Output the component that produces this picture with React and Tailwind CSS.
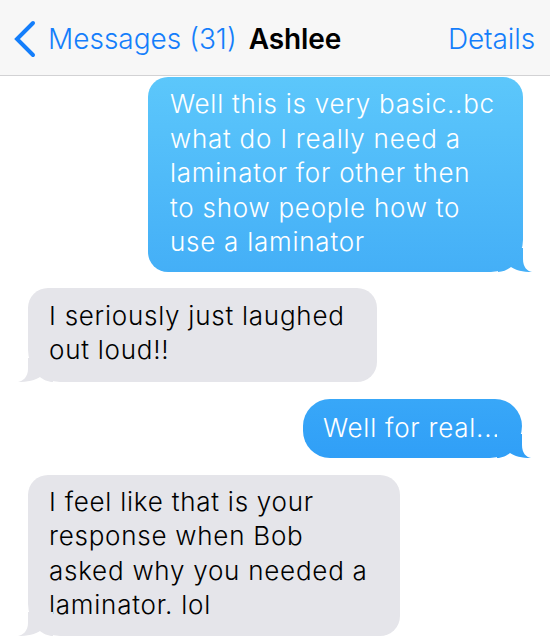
import React from 'react';

// tail drawn in the same gradient as its bubble (h = bubble height)
function BlueTail({ id, h, from, to }) {
  return (
    <svg
      className="absolute right-[-9px] bottom-0 w-[34px] h-[24px] overflow-visible"
      viewBox="0 0 34 24"
    >
      <defs>
        <linearGradient id={id} gradientUnits="userSpaceOnUse" x1="0" y1={24 - h} x2="0" y2="24">
          <stop offset="0" stopColor={from} />
          <stop offset="1" stopColor={to} />
        </linearGradient>
      </defs>
      <path
        d="M0 24 C5 24 10 21.5 13 19 C17 22 25 24 34 24 C29 23 25 19 25 11 L25 0 L0 0 Z"
        fill={`url(#${id})`}
      />
    </svg>
  );
}

function GrayTail() {
  return (
    <svg
      className="absolute left-[-10px] bottom-0 w-[35px] h-[24px]"
      viewBox="0 0 35 24"
    >
      <path
        d="M35 24 C30 24 25 21.5 22 19 C18 22 9 24 0 24 C5 23 10 19 10 11 L10 0 L35 0 Z"
        fill="#e5e5ea"
      />
    </svg>
  );
}

export default function App() {
  return (
    <div className="w-[550px] h-[640px] overflow-hidden bg-white font-['Inter','Liberation_Sans',sans-serif]">
      {/* Nav bar */}
      <div className="h-[76px] bg-[#f7f7f7] border-b border-[#d2d2d4] flex items-center pt-[2px] text-[28px] tracking-[-0.1px]">
        <svg className="ml-[13px] w-[24px] h-[38px]" viewBox="0 0 24 38">
          <polyline
            points="20,3 4,19 20,35"
            fill="none"
            stroke="#147efb"
            strokeWidth="4"
            strokeLinecap="round"
            strokeLinejoin="miter"
          />
        </svg>
        <span className="ml-[11px] font-[350] tracking-[0px] text-[#147efb]">Messages (31)</span>
        <span className="ml-[12px] font-semibold text-black">Ashlee</span>
        <span className="ml-auto mr-[15px] font-[350] text-[#147efb]">Details</span>
      </div>

      {/* Thread */}
      <div className="flex flex-col pt-[1px] text-[26px] leading-[34.5px] tracking-[0.75px] font-[350] whitespace-nowrap">
        <div className="relative self-end mr-[27px] w-[375px] h-[194.5px] pl-[22px] pt-[10px] rounded-[20px] rounded-br-[32px] bg-linear-to-b from-[#5cc7fb] to-[#44aff7] text-white">
          Well this is very basic..bc
          <br />
          what do I really need a
          <br />
          laminator for other then
          <br />
          to show people how to
          <br />
          use a laminator
          <BlueTail id="t1" h={194.5} from="#5cc7fb" to="#44aff7" />
        </div>

        <div className="relative self-start ml-[28px] mt-[16px] w-[349px] pl-[21px] pt-[11px] pb-[14px] rounded-[20px] rounded-bl-[32px] bg-[#e5e5ea] text-black">
          I seriously just laughed
          <br />
          out loud!!
          <GrayTail />
        </div>

        <div className="relative self-end mr-[28px] mt-[17px] w-[219px] h-[59px] pl-[20px] pt-[12px] rounded-[27px] rounded-br-[32px] bg-linear-to-b from-[#38a7f8] to-[#309ff7] text-white">
          Well for real...
          <BlueTail id="t2" h={59} from="#38a7f8" to="#309ff7" />
        </div>

        <div className="relative self-start ml-[28px] mt-[17px] w-[372px] pl-[21px] pt-[10px] pb-[13px] rounded-[20px] rounded-bl-[32px] bg-[#e5e5ea] text-black">
          I feel like that is your
          <br />
          response when Bob
          <br />
          asked why you needed a
          <br />
          laminator. lol
          <GrayTail />
        </div>
      </div>
    </div>
  );
}
